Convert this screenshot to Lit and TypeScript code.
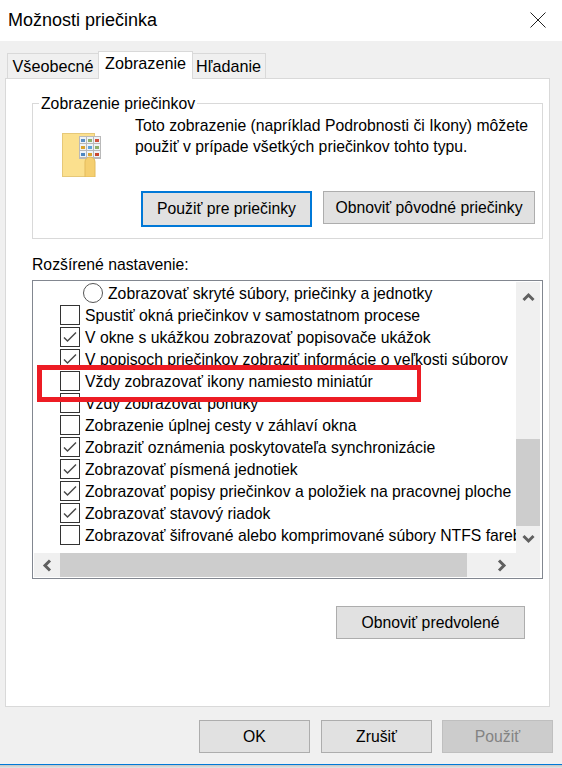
import { LitElement, html, css, svg } from "lit";
import { customElement } from "lit/decorators.js";

type Row = { kind: "radio" | "check"; on?: boolean; text: string };

const ROWS: Row[] = [
  { kind: "radio", text: "Zobrazovať skryté súbory, priečinky a jednotky" },
  { kind: "check", text: "Spustiť okná priečinkov v samostatnom procese" },
  { kind: "check", on: true, text: "V okne s ukážkou zobrazovať popisovače ukážok" },
  { kind: "check", on: true, text: "V popisoch priečinkov zobraziť informácie o veľkosti súborov" },
  { kind: "check", text: "Vždy zobrazovať ikony namiesto miniatúr" },
  { kind: "check", text: "Vždy zobrazovať ponuky" },
  { kind: "check", text: "Zobrazenie úplnej cesty v záhlaví okna" },
  { kind: "check", on: true, text: "Zobraziť oznámenia poskytovateľa synchronizácie" },
  { kind: "check", on: true, text: "Zobrazovať písmená jednotiek" },
  { kind: "check", on: true, text: "Zobrazovať popisy priečinkov a položiek na pracovnej ploche" },
  { kind: "check", on: true, text: "Zobrazovať stavový riadok" },
  { kind: "check", text: "Zobrazovať šifrované alebo komprimované súbory NTFS farebne" },
];

const chevron = (points: string) => html`<svg class="chev" width="13" height="13" viewBox="0 0 13 13">
  ${svg`<polyline points=${points} fill="none" stroke="#606060" stroke-width="3"></polyline>`}
</svg>`;

@customElement("app-root")
export class AppRoot extends LitElement {
  static styles = css`
    :host {
      display: block;
      width: 562px;
      height: 768px;
      overflow: hidden;
      background: #f0f0f0;
      font-family: "Liberation Sans", Arial, sans-serif;
      font-size: 15.75px;
      color: #000;
      position: relative;
    }
    .title {
      height: 41px;
      background: #fff;
      display: flex;
      align-items: center;
      justify-content: space-between;
      padding: 0 16px 1px 8px;
      box-sizing: border-box;
      font-size: 18px;
    }
    .tabs {
      display: flex;
      align-items: flex-end;
      height: 37px;
      padding-left: 7px;
      box-sizing: border-box;
      position: relative;
      z-index: 1;
      font-size: 16.2px;
    }
    .tab {
      height: 25px;
      box-sizing: border-box;
      border: 1px solid #d9d9d9;
      border-bottom: none;
      border-left: none;
      display: flex;
      align-items: center;
      justify-content: center;
      padding-top: 1px;
    }
    .tab.first { border-left: 1px solid #d9d9d9; width: 92px; }
    .tab.last { width: 74px; }
    .tab.active {
      width: 95px;
      height: 28px;
      background: #fff;
      border-left: 1px solid #d9d9d9;
      margin: 0 -1px -1px -1px;
      padding-top: 0;
      padding-bottom: 4px;
      position: relative;
    }
    .panel {
      margin: 0 12px 0 5px;
      height: 629px;
      box-sizing: border-box;
      background: #fff;
      border: 1px solid #d9d9d9;
      padding: 24px 6px 0 26px;
    }
    .group {
      height: 136px;
      box-sizing: border-box;
      border: 1px solid #d9d9d9;
      position: relative;
      padding: 11px 7px 0 24px;
      display: grid;
      grid-template-columns: 78px 1fr;
      grid-template-rows: 76px auto;
    }
    .legend {
      position: absolute;
      left: 6px;
      top: -10px;
      line-height: 19px;
      background: #fff;
      padding: 0 2px;
    }
    .folder { padding: 18px 0 0 5px; }
    .folder svg { display: block; }
    .desc { line-height: 21px; white-space: nowrap; }
    .group-buttons {
      grid-column: 1 / 3;
      display: flex;
      align-items: flex-start;
      gap: 11px;
      margin-left: 84px;
    }
    .btn {
      box-sizing: border-box;
      background: #e1e1e1;
      border: 1px solid #adadad;
      display: flex;
      align-items: center;
      justify-content: center;
      white-space: nowrap;
    }
    .btn.primary { width: 171px; height: 36px; border: 2px solid #0078d7; }
    .btn.restore { width: 212px; height: 33px; }
    .btn.defaults { width: 189px; height: 33px; }
    .btn.foot { width: 111px; height: 33px; }
    .btn.ok { margin-right: 1px; }
    .btn.disabled { background: #cccccc; border-color: #bfbfbf; color: #838383; }
    .label { margin-top: 16px; padding-top: 1px; line-height: 18px; height: 18px; }
    .list {
      margin-top: 6px;
      width: 511px;
      height: 299px;
      box-sizing: border-box;
      border: 1px solid #828790;
      padding: 1px 2px 1px 1px;
      display: grid;
      grid-template-columns: 482px 24px;
      grid-template-rows: 271px 24px;
    }
    .rows { overflow: hidden; }
    .row {
      height: 22px;
      display: flex;
      align-items: center;
      gap: 5px;
      padding-left: 26px;
      white-space: nowrap;
    }
    .row.radio-row { padding-left: 49px; }
    .row-text { padding-top: 2px; }
    .box {
      flex: none;
      width: 20px;
      height: 20px;
      box-sizing: border-box;
      border: 1px solid #333;
      background: #fff;
      display: flex;
      align-items: center;
      justify-content: center;
    }
    .radio {
      flex: none;
      width: 20px;
      height: 20px;
      box-sizing: border-box;
      border: 1px solid #555;
      border-radius: 50%;
    }
    .vbar {
      background: #f0f0f0;
      display: flex;
      flex-direction: column;
      align-items: center;
    }
    .vbar .thumb { width: 100%; height: 87px; background: #cdcdcd; margin-top: 136px; flex: none; }
    .vbar .chev { flex: none; }
    .vbar .chev:first-child { margin-top: 8px; }
    .vbar .chev:last-child { margin-top: 6px; }
    .hbar {
      grid-column: 1 / 3;
      background: #f0f0f0;
      display: flex;
      align-items: center;
    }
    .hbar .thumb { height: 100%; width: 407px; background: #cdcdcd; margin-left: 6px; flex: none; }
    .hbar .chev { flex: none; }
    .hbar .chev:first-child { margin-left: 7px; }
    .hbar .chev:last-child { margin-left: 28px; }
    .defaults-row { display: flex; justify-content: flex-end; padding: 27px 18px 0 0; }
    .footer {
      display: flex;
      justify-content: flex-end;
      gap: 10px;
      padding: 13px 9px 0 0;
    }
    .edge {
      position: absolute;
      left: 0;
      right: 0;
      bottom: 0;
      height: 4px;
      box-sizing: border-box;
      border-top: 1px solid #0078d7;
      background: linear-gradient(#c4c4c4, #e6e6e6);
    }
    .highlight {
      position: absolute;
      left: 37px;
      top: 365px;
      width: 384px;
      height: 37px;
      box-sizing: border-box;
      border: 5px solid #ed1c24;
      border-width: 5px 4px 5px 5px;
      pointer-events: none;
    }
  `;

  private folder() {
    const colors = ["#5b8fc4", "#8fb06a", "#d0503c", "#d9a32e", "#5fa3d8", "#8fb06a", "#4d86c0", "#d9a32e", "#c9472f"];
    return html`<svg width="40" height="44" viewBox="0 0 40 44">
      <rect x="0.5" y="0.5" width="32" height="43" fill="#fbe08e" stroke="#e6c878"></rect>
      <rect x="17" y="3" width="22" height="23" fill="#b9b9b9"></rect>
      ${colors.map((c, i) => svg`
        <rect x=${18 + (i % 3) * 7} y=${4 + Math.floor(i / 3) * 7} width="6" height="6" fill="#eef3f8"></rect>
        <rect x=${19 + (i % 3) * 7} y=${6 + Math.floor(i / 3) * 7} width="4" height="3" fill=${c}></rect>`)}
      <path d="M23 44V29a5 5 0 0 1 10 0V44Z" fill="#f5cf70" stroke="#e3bb5c"></path>
    </svg>`;
  }

  render() {
    return html`
      <div class="title">
        <span>Možnosti priečinka</span>
        <svg width="16" height="16" viewBox="0 0 16 16">
          <path d="M0.5 0.5L15.5 15.5M15.5 0.5L0.5 15.5" stroke="#222" stroke-width="1" fill="none"></path>
        </svg>
      </div>
      <div class="tabs">
        <div class="tab first">Všeobecné</div>
        <div class="tab active">Zobrazenie</div>
        <div class="tab last">Hľadanie</div>
      </div>
      <div class="panel">
        <div class="group">
          <div class="legend">Zobrazenie priečinkov</div>
          <div class="folder">${this.folder()}</div>
          <div class="desc">Toto zobrazenie (napríklad Podrobnosti či Ikony) môžete<br />použiť v prípade všetkých priečinkov tohto typu.</div>
          <div class="group-buttons">
            <div class="btn primary">Použiť pre priečinky</div>
            <div class="btn restore">Obnoviť pôvodné priečinky</div>
          </div>
        </div>
        <div class="label">Rozšírené nastavenie:</div>
        <div class="list">
          <div class="rows">
            ${ROWS.map((r) =>
              r.kind === "radio"
                ? html`<div class="row radio-row"><span class="radio"></span><span class="row-text">${r.text}</span></div>`
                : html`<div class="row">
                    <span class="box">
                      ${r.on
                        ? html`<svg width="14" height="12" viewBox="0 0 14 12"><polyline points="1,6.5 4.5,10 13,1.5" fill="none" stroke="#4a4a4a" stroke-width="1.5"></polyline></svg>`
                        : ""}
                    </span>
                    <span class="row-text">${r.text}</span>
                  </div>`
            )}
          </div>
          <div class="vbar">
            ${chevron("1.5,10 6.5,5 11.5,10")}
            <div class="thumb"></div>
            ${chevron("1.5,4 6.5,9 11.5,4")}
          </div>
          <div class="hbar">
            ${chevron("9,1.5 4,6.5 9,11.5")}
            <div class="thumb"></div>
            ${chevron("4,1.5 9,6.5 4,11.5")}
          </div>
        </div>
        <div class="defaults-row"><div class="btn defaults">Obnoviť predvolené</div></div>
      </div>
      <div class="footer">
        <div class="btn foot ok">OK</div>
        <div class="btn foot">Zrušiť</div>
        <div class="btn foot disabled">Použiť</div>
      </div>
      <div class="edge"></div>
      <div class="highlight"></div>
    `;
  }
}
